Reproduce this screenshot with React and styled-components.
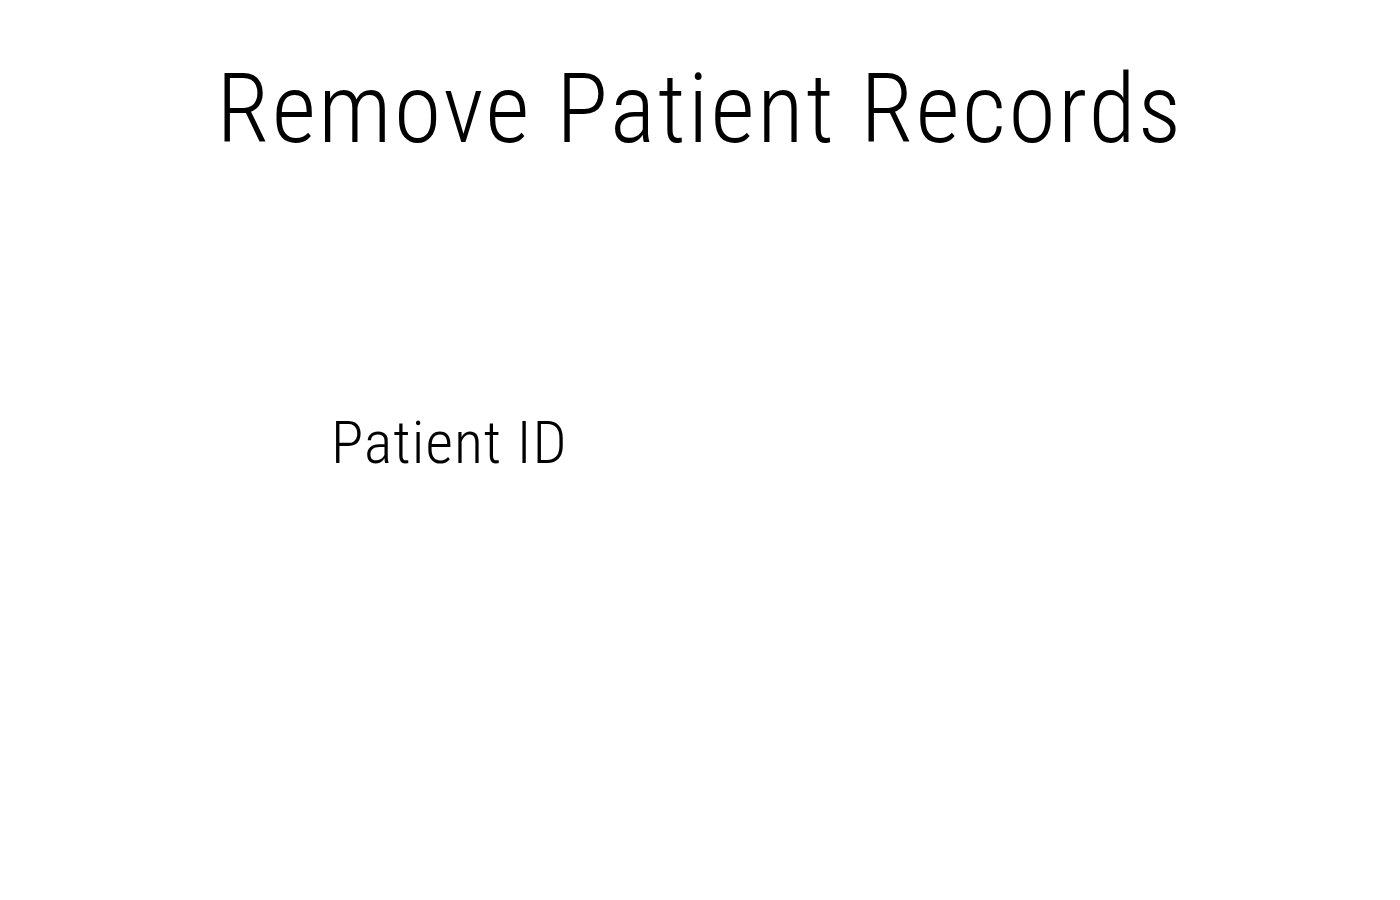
import styled, { createGlobalStyle } from 'styled-components';

const Global = createGlobalStyle`
  body {
    margin: 0;
    background: #fff;
    font-family: "Roboto Condensed", Roboto, sans-serif;
    color: #000;
  }
`;

const Page = styled.main`
  min-height: 900px;
  display: flex;
  flex-direction: column;
  align-items: center;
`;

const Title = styled.h1`
  margin: 52px 0 0;
  font-size: 96px;
  font-weight: 300;
  line-height: 1.2;
  letter-spacing: 2.5px;
  text-align: center;
`;

const Form = styled.form`
  width: 738px;
  margin-top: 240px;
  display: flex;
  flex-direction: column;
`;

const Label = styled.label`
  font-size: 60px;
  font-weight: 300;
  line-height: 1.2;
  letter-spacing: 1px;
`;

export default function App() {
  return (
    <>
      <Global />
      <Page>
        <Title>Remove Patient Records</Title>
        <Form onSubmit={e => e.preventDefault()}>
          <Label htmlFor="patient-id">Patient ID</Label>
        </Form>
      </Page>
    </>
  );
}
